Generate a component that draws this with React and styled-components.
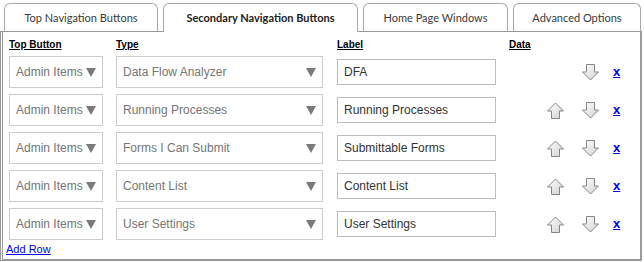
import styled, { createGlobalStyle } from 'styled-components';

const GlobalStyle = createGlobalStyle`
  body {
    margin: 0;
    background: #fff;
    font-family: "Liberation Sans", Arial, sans-serif;
  }
`;

const Wrapper = styled.div`
  width: 644px;
  height: 262px;
  box-sizing: border-box;
`;

const TabBar = styled.div`
  display: flex;
  gap: 5px;
  padding: 3px 0 0 4px;
  height: 31px;
  box-sizing: border-box;
`;

const Tab = styled.div`
  position: relative;
  z-index: ${(p) => (p.$active ? 2 : 0)};
  width: ${(p) => p.$width}px;
  height: ${(p) => (p.$active ? 29 : 28)}px;
  box-sizing: border-box;
  border: 1px solid #a8a8a8;
  border-bottom: none;
  border-radius: 6px 6px 0 0;
  background: #fff;
  display: flex;
  align-items: center;
  justify-content: center;
  padding-bottom: ${(p) => (p.$active ? 2 : 1)}px;
  font-family: Lato, "Open Sans", sans-serif;
  font-size: 11px;
  font-weight: ${(p) => (p.$active ? 700 : 400)};
  color: ${(p) => (p.$active ? '#222' : '#3a3a3a')};
`;

const Panel = styled.div`
  position: relative;
  z-index: 1;
  width: 642px;
  height: 230px;
  box-sizing: border-box;
  border: 2px solid #9a9a9a;
  border-top: 1px solid #9a9a9a;
  border-left: 3px double #9a9a9a;
  padding: 0 0 0 3px;
  background: #fff;
`;

const Rows = styled.div`
  display: flex;
  flex-direction: column;
  gap: 6px;
`;

const Grid = styled.div`
  display: grid;
  grid-template-columns: 107px 221px 172px 1fr;
  align-items: center;
  padding-left: 3px;
  height: ${(p) => p.$height}px;
`;

const HeadCell = styled.span`
  font-size: 10px;
  font-weight: 700;
  color: #000;
  text-decoration: underline;
`;

const Select = styled.div`
  width: ${(p) => p.$width}px;
  height: 32px;
  box-sizing: border-box;
  border: 1px solid #cdcdcd;
  display: flex;
  align-items: center;
  justify-content: space-between;
  padding: 0 6px 0 6px;
  font-size: 12px;
  color: #757575;
  white-space: nowrap;
`;

const Caret = styled.span`
  width: 0;
  height: 0;
  border-left: 5.5px solid transparent;
  border-right: 5.5px solid transparent;
  border-top: 9px solid #7a7a7a;
  margin-top: 1px;
`;

const Input = styled.div`
  width: 159px;
  height: 26px;
  box-sizing: border-box;
  border: 1px solid #bdbdbd;
  display: flex;
  align-items: center;
  padding-left: 6px;
  font-size: 12px;
  color: #333;
`;

const DataCell = styled.div`
  display: flex;
  align-items: center;
  padding-left: 38px;
`;

const ArrowButton = styled.span`
  display: inline-flex;
  width: 17px;
  height: 17px;
  margin-right: ${(p) => p.$mr}px;
  visibility: ${(p) => (p.$hidden ? 'hidden' : 'visible')};
`;

const RemoveLink = styled.a`
  color: #0000ee;
  font-size: 13px;
  font-weight: 700;
  text-decoration: underline;
  margin-top: -2px;
  cursor: pointer;
`;

const AddRow = styled.a`
  display: block;
  margin-top: 3px;
  font-size: 11px;
  color: #0000ee;
  text-decoration: underline;
  cursor: pointer;
`;

function Arrow({ down }) {
  const id = down ? 'gd' : 'gu';
  return (
    <svg width="17" height="17" viewBox="0 0 17 17">
      <defs>
        <linearGradient id={id} x1="0" y1="0" x2="1" y2="1">
          <stop offset="0" stopColor="#ffffff" />
          <stop offset="1" stopColor="#d0d0d0" />
        </linearGradient>
      </defs>
      <polygon
        points={
          down
            ? '4.5,0.5 12.5,0.5 12.5,8 16.5,8 8.5,16 0.5,8 4.5,8'
            : '8.5,1 16.5,9 12.5,9 12.5,16.5 4.5,16.5 4.5,9 0.5,9'
        }
        fill={`url(#${id})`}
        stroke="#858585"
        strokeWidth="1"
        strokeLinejoin="round"
      />
    </svg>
  );
}

const tabs = [
  { label: 'Top Navigation Buttons', width: 154 },
  { label: 'Secondary Navigation Buttons', width: 195, active: true },
  { label: 'Home Page Windows', width: 145 },
  { label: 'Advanced Options', width: 128 },
];

const rows = [
  { type: 'Data Flow Analyzer', label: 'DFA' },
  { type: 'Running Processes', label: 'Running Processes' },
  { type: 'Forms I Can Submit', label: 'Submittable Forms' },
  { type: 'Content List', label: 'Content List' },
  { type: 'User Settings', label: 'User Settings' },
];

export default function App() {
  return (
    <Wrapper>
      <GlobalStyle />
      <TabBar>
        {tabs.map((t) => (
          <Tab key={t.label} $width={t.width} $active={t.active}>
            {t.label}
          </Tab>
        ))}
      </TabBar>
      <Panel>
        <Grid $height={24}>
          <HeadCell>Top Button</HeadCell>
          <HeadCell>Type</HeadCell>
          <HeadCell>Label</HeadCell>
          <HeadCell>Data</HeadCell>
        </Grid>
        <Rows>
          {rows.map((r, i) => (
            <Grid key={r.type} $height={32}>
              <Select $width={94}>
                Admin Items <Caret />
              </Select>
              <Select $width={207}>
                {r.type} <Caret />
              </Select>
              <Input>{r.label}</Input>
              <DataCell>
                <ArrowButton $mr={18} $hidden={i === 0}>
                  <Arrow />
                </ArrowButton>
                <ArrowButton $mr={14}>
                  <Arrow down />
                </ArrowButton>
                <RemoveLink>x</RemoveLink>
              </DataCell>
            </Grid>
          ))}
        </Rows>
        <AddRow>Add Row</AddRow>
      </Panel>
    </Wrapper>
  );
}
